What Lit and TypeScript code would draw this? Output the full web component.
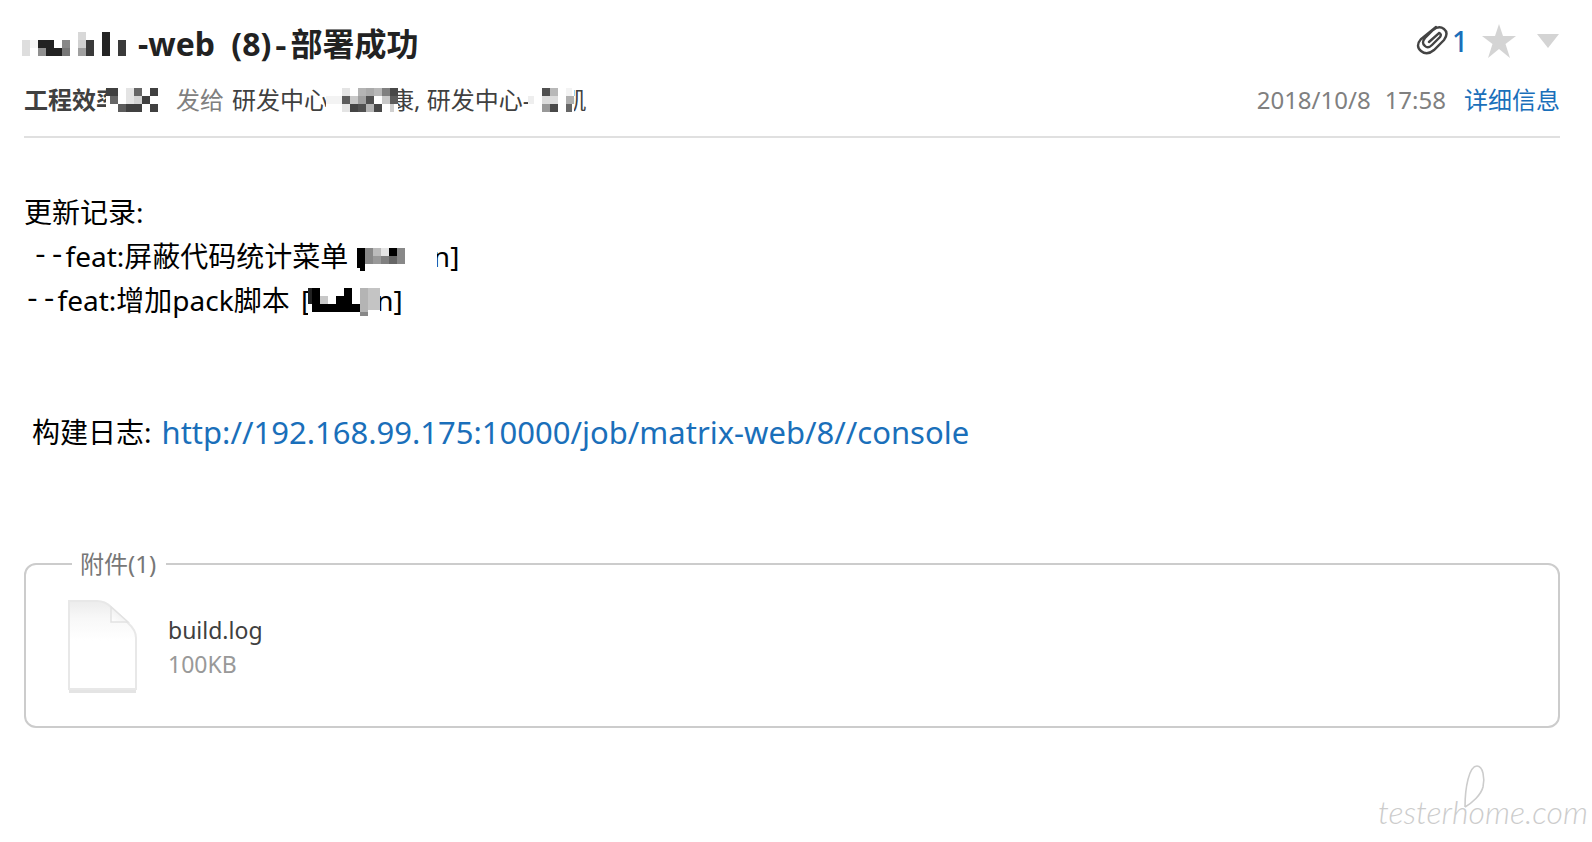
import { LitElement, html, css, svg } from "lit";
import { customElement } from "lit/decorators.js";

type Cell = [x: number, y: number, w: number, h: number, fill: string];

const mosaic = (w: number, h: number, cells: Cell[], cls = "") => html`<svg
    class="mosaic ${cls}" width=${w} height=${h} viewBox="0 0 ${w} ${h}" aria-hidden="true" shape-rendering="crispEdges"
  >${cells.map(([x, y, cw, ch, c]) => svg`<rect x=${x} y=${y} width=${cw} height=${ch} fill=${c}></rect>`)}</svg>`;

const titleCells: Cell[] = [
  [56, 0, 8, 8, "#d8d8d8"], [80, 0, 8, 24, "#242424"],
  [0, 8, 8, 16, "#dedede"], [8, 8, 8, 8, "#f5f5f5"], [16, 8, 16, 8, "#222"], [40, 8, 8, 8, "#888"],
  [16, 16, 8, 8, "#909090"], [24, 16, 16, 8, "#222"], [40, 16, 8, 8, "#777"],
  [56, 8, 8, 8, "#d0d0d0"], [56, 16, 8, 8, "#a0a0a0"], [64, 8, 8, 16, "#3a3a3a"], [96, 8, 8, 16, "#3a3a3a"],
];
const senderCells: Cell[] = [
  [0, 0, 12, 8, "#404040"], [20, 0, 8, 16, "#e4e4e4"], [28, 0, 8, 8, "#666"], [44, 0, 8, 8, "#404040"],
  [4, 8, 8, 8, "#666"], [28, 8, 8, 8, "#d4d4d4"], [36, 8, 8, 8, "#404040"],
  [12, 16, 8, 8, "#5c5c5c"], [20, 16, 16, 8, "#404040"], [44, 16, 8, 8, "#404040"],
];
const firstCells: Cell[] = [
  [16, 0, 8, 8, "#e4e4e4"], [32, 0, 8, 8, "#b4b4b4"], [40, 0, 8, 8, "#aaa"], [48, 0, 8, 8, "#b8b8b8"], [56, 0, 8, 8, "#808080"], [64, 0, 8, 8, "#484848"],
  [0, 8, 16, 8, "#f3f3f3"], [16, 8, 8, 8, "#5c5c5c"], [24, 8, 8, 8, "#c8c8c8"], [32, 8, 8, 8, "#a0a0a0"], [40, 8, 8, 8, "#505050"], [56, 8, 8, 8, "#c8c8c8"], [64, 8, 8, 8, "#5c5c5c"],
  [16, 16, 8, 8, "#e4e4e4"], [24, 16, 8, 8, "#444"], [32, 16, 8, 8, "#505050"], [40, 16, 8, 8, "#b4b4b4"], [48, 16, 8, 8, "#484848"], [64, 16, 4, 8, "#d0d0d0"],
];
const secondCells: Cell[] = [
  [0, 8, 6, 8, "#eee"], [14, 0, 8, 8, "#505050"], [22, 0, 8, 8, "#b8b8b8"], [38, 0, 6, 8, "#f3f3f3"],
  [14, 8, 16, 8, "#dcdcdc"], [38, 8, 8, 8, "#b0b0b0"],
  [14, 16, 8, 8, "#999"], [22, 16, 8, 8, "#484848"], [38, 16, 6, 8, "#666"],
];
const authorOneCells: Cell[] = [
  [0, 8, 8, 20, "#000"], [3, 28, 5, 3, "#000"],
  [8, 8, 8, 16, "#888"], [16, 8, 8, 8, "#bbb"], [24, 8, 8, 8, "#e4e4e4"], [32, 8, 8, 8, "#000"], [40, 8, 8, 16, "#888"],
  [16, 16, 8, 8, "#999"], [24, 16, 8, 8, "#808080"], [32, 16, 8, 8, "#666"],
];
const authorTwoCells: Cell[] = [
  [0, 4, 4, 16, "#222"], [4, 4, 8, 24, "#000"], [12, 12, 8, 8, "#c8c8c8"], [28, 12, 8, 8, "#000"],
  [36, 4, 8, 24, "#000"], [12, 20, 40, 8, "#000"],
  [52, 4, 8, 24, "#b4b4b4"], [60, 4, 12, 22, "#c4c4c4"], [52, 28, 8, 4, "#888"],
];

@customElement("app-root")
export class AppRoot extends LitElement {
  static styles = css`
    :host {
      display: block;
      box-sizing: border-box;
      padding: 24px 32px 0 24px;
      background: #fff;
      color: #000;
      font-family: "Noto Sans", "Noto Sans CJK SC", sans-serif;
      font-size: 28px;
      line-height: 44px;
    }
    a { color: #1a6fba; text-decoration: none; }
    .mosaic { position: relative; display: block; flex: none; background: #fff; }
    .meta, .people, .tools, .line, .file { display: flex; align-items: center; }
    .top { display: flex; align-items: flex-start; justify-content: space-between; }
    .meta { justify-content: space-between; }
    .title { display: flex; align-items: center; gap: 12px; margin: 0 0 0 -2px; font-size: 32px; line-height: 40px; color: #222; font-weight: 700; }
    .title .mosaic { margin-bottom: 4px; }
    .title .build { margin-left: 8px; }
    .tools { height: 34px; }
    .tools button { display: flex; padding: 0; border: 0; background: none; }
    .clip { margin-right: 2px; }
    .tools a { font-weight: 500; }
    .tools .star { margin-left: 14px; }
    .tools .more { margin-left: 20px; }
    .meta { height: 40px; margin-top: 12px; padding-bottom: 16px; border-bottom: 2px solid #e0e0e0; font-size: 24px; line-height: 40px; color: #404040; }
    .people { white-space: pre; }
    .sender { font-weight: 700; }
    .over-char { margin-left: -14px; }
    .over-edge { margin-left: -2px; }
    .over-bracket { margin-left: -12px; }
    .under-sm { margin-left: -4px; }
    .under-md { margin-left: -8px; }
    .under-lg { margin-left: -12px; }
    .to { margin: 0 8px 0 18px; color: #808080; }
    .when { display: flex; gap: 18px; color: #808080; }
    .when time { display: flex; gap: 14px; }
    .body { padding-top: 52px; }
    .line { margin: 0; white-space: pre; }
    .indent { padding-left: 8px; }
    .dash { font-family: "Liberation Mono", monospace; }
    .author { display: flex; align-items: center; margin-left: 4px; }
    .log { margin-top: 88px; }
    .url { margin-left: 10px; font-size: 31px; font-weight: 450; }
    .files { min-width: 0; margin: 90px 0 0; padding: 0 40px 30px; border: 2px solid #ccc; border-radius: 12px; }
    .files legend { margin-left: 6px; padding: 0 10px 0 8px; font-size: 24px; line-height: 40px; color: #777; }
    .file { gap: 30px; padding-top: 14px; }
    .info { display: flex; flex-direction: column; font-size: 23px; line-height: 34px; }
    .name { color: #404040; }
    .size { color: #999; }
    .mark { display: flex; justify-content: flex-end; margin: 60px -28px 0 0; }
    .brand { position: relative; font-family: Lato, sans-serif; font-size: 32px; font-style: italic; font-weight: 300; line-height: 48px; color: #ccc; }
    .flourish { position: absolute; left: 84px; bottom: 28px; }
  `;

  render() {
    return html`
      <header>
        <div class="top">
          <h1 class="title">${mosaic(104, 24, titleCells)}<span>-web <span class="build">(8)<span class="dash">-</span>部署成功</span></span></h1>
          <div class="tools">
            <svg class="clip" width="34" height="32" viewBox="0 0 34 32" fill="none" stroke="#444" stroke-width="2.4" stroke-linecap="round" aria-hidden="true">
              <path d="M20 2L5 14Q-1 21 5 26Q11 31 18 25L28 15Q33 8 28 4Q23 0 17 5L9 13Q5 18 9 21Q12 24 16 20L24 12Q26 9 23 8L13 17"></path>
            </svg>
            <a href="#files">1</a>
            <button class="star" aria-label="星标"><svg width="34" height="34" viewBox="0 0 34 34"><path d="M17 0L21 12H34L23.500 20L28 34L17 25L6 34L10.500 20L0 12H13Z" fill="#d4d4d4"></path></svg></button>
            <button class="more" aria-label="更多"><svg width="24" height="14" viewBox="0 0 24 14"><path d="M1 0H23L12 14Z" fill="#d4d4d4"></path></svg></button>
          </div>
        </div>
        <div class="meta">
          <div class="people"><span class="sender">工程效率</span>${mosaic(52, 24, senderCells, "over-char")}<span class="to">发给</span><span>研发中心</span>${mosaic(72, 24, firstCells, "over-edge")}<span class="under-md">康, 研发中心-</span>${mosaic(46, 24, secondCells, "over-edge")}<span class="under-lg">凯</span></div>
          <div class="when"><time><span>2018/10/8</span><span>17:58</span></time><a href="#detail">详细信息</a></div>
        </div>
      </header>
      <main class="body">
        <p class="line">更新记录:</p>
        <p class="line indent"><span class="dash">--</span>feat:屏蔽代码统计菜单 <span class="author">[${mosaic(80, 32, authorOneCells, "over-bracket")}<span class="under-sm">n]</span></span></p>
        <p class="line"><span class="dash">--</span>feat:增加pack脚本 <span class="author">[${mosaic(72, 32, authorTwoCells, "over-edge")}<span class="under-sm">n]</span></span></p>
        <p class="line log indent">构建日志:<a class="url" href="http://192.168.99.175:10000/job/matrix-web/8//console">http://192.168.99.175:10000/job/matrix-web/8//console</a></p>
        <fieldset class="files" id="files">
          <legend>附件(1)</legend>
          <div class="file">
            <svg width="72" height="98" viewBox="0 0 72 98" aria-hidden="true">
              <defs>
                <linearGradient id="sheet" x1="0" y1="0" x2="0" y2="1">
                  <stop offset="0" stop-color="#ececec"></stop>
                  <stop offset="0.200" stop-color="#f8f8f8"></stop>
                  <stop offset="0.450" stop-color="#fff"></stop>
                </linearGradient>
                <linearGradient id="fold" x1="0" y1="1" x2="0.600" y2="0.300">
                  <stop offset="0" stop-color="#fff"></stop>
                  <stop offset="1" stop-color="#eee"></stop>
                </linearGradient>
              </defs>
              <path d="M3 93H70" stroke="#e4e4e4" stroke-width="4"></path>
              <path d="M3 3H31Q39 3 45 9L62 25Q70 32 70 40V91H3Z" fill="url(#sheet)" stroke="#e8e8e8" stroke-width="2"></path>
              <path d="M45 9V24H62Z" fill="url(#fold)" stroke="#e2e2e2" stroke-width="1.500"></path>
            </svg>
            <div class="info"><span class="name">build.log</span><span class="size">100KB</span></div>
          </div>
        </fieldset>
      </main>
      <footer class="mark">
        <div class="brand">testerhome.com
          <svg class="flourish" width="24" height="44" viewBox="0 0 24 44" fill="none" stroke="#ccc" stroke-width="1.600" aria-hidden="true">
            <path d="M3 43C3 24 7 2 15 2C21 2 23 14 21 23C19 31 10 39 3 43"></path>
          </svg>
        </div>
      </footer>`;
  }
}
